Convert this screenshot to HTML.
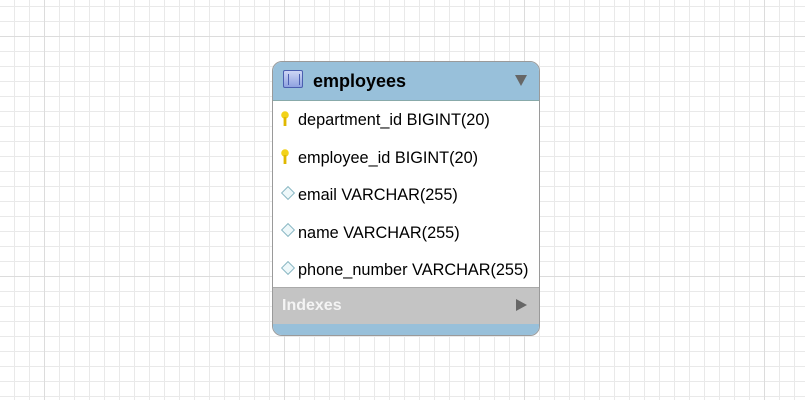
<!DOCTYPE html>
<html><head><style>
body{margin:0;width:805px;height:400px;overflow:hidden;background:#fff;
background-image:
linear-gradient(to right,#dcdcdc 0,#dcdcdc 1px,transparent 1px),
linear-gradient(to bottom,#dcdcdc 0,#dcdcdc 1px,transparent 1px),
linear-gradient(to right,#e9e9e9 0,#e9e9e9 1px,transparent 1px),
linear-gradient(to bottom,#e9e9e9 0,#e9e9e9 1px,transparent 1px);
background-size:240px 240px,240px 240px,15px 15px,15px 15px;
background-position:44px 0,0 36px,14px 0,0 6px;
font-family:"Liberation Sans",sans-serif;position:relative}
.t{position:absolute;left:272px;top:61px;width:266px;height:273px;border:1px solid #9a9a9a;border-radius:10px;overflow:hidden;background:#fff}
.h{height:38px;background:#98c0da;border-bottom:1px solid #8aa;position:relative}
.h b{position:absolute;left:40px;top:9px;font-size:18px;color:#000}
.ic{position:absolute;left:10px;top:8px;width:20px;height:18px;border:1px solid #4a5fb0;border-radius:2px;background:linear-gradient(#cdd6f5,#8fa2e0);box-sizing:border-box}
.ic:before{content:"";position:absolute;left:4px;top:3px;width:10px;height:11px;border-left:1px solid #4a5fb0;border-right:1px solid #4a5fb0}
.tri{position:absolute;right:12px;top:13px;width:0;height:0;border-left:6px solid transparent;border-right:6px solid transparent;border-top:11px solid #666}
.r{position:absolute;left:25px;font-size:16.3px;color:#000}
.k{position:absolute;left:8px;width:8px;height:15px}
.d{position:absolute;left:10px;width:8px;height:8px;border:1px solid #8bb8c4;background:#eef8fa;transform:rotate(45deg)}
.ix{position:absolute;left:0;top:225px;width:100%;height:36px;background:#c4c4c4;border-top:1px solid #aaa}
.ix span{position:absolute;left:9px;top:9px;color:#f4f4f4;font-weight:bold;font-size:16px}
.ix i{position:absolute;right:12px;top:11px;border-top:6px solid transparent;border-bottom:6px solid transparent;border-left:11px solid #666}
.ft{position:absolute;left:0;top:262px;width:100%;height:12px;background:#98c0da}
</style></head><body>
<div class="t">
<div class="h"><div class="ic"></div><b>employees</b><div class="tri"></div></div>
<svg class="k" style="top:49px" viewBox="0 0 8 15"><ellipse cx="4" cy="4" rx="3.8" ry="3.8" fill="#f2d21a"/><rect x="2.6" y="6" width="2.8" height="9" fill="#e0b800"/></svg>
<div class="r" style="top:49px">department_id BIGINT(20)</div>
<svg class="k" style="top:87px" viewBox="0 0 8 15"><ellipse cx="4" cy="4" rx="3.8" ry="3.8" fill="#f2d21a"/><rect x="2.6" y="6" width="2.8" height="9" fill="#e0b800"/></svg>
<div class="r" style="top:87px">employee_id BIGINT(20)</div>
<div class="d" style="top:126px"></div><div class="r" style="top:124px">email VARCHAR(255)</div>
<div class="d" style="top:163px"></div><div class="r" style="top:162px">name VARCHAR(255)</div>
<div class="d" style="top:201px"></div><div class="r" style="top:199px">phone_number VARCHAR(255)</div>
<div class="ix"><span>Indexes</span><i></i></div>
<div class="ft"></div>
</div>
</body></html>
